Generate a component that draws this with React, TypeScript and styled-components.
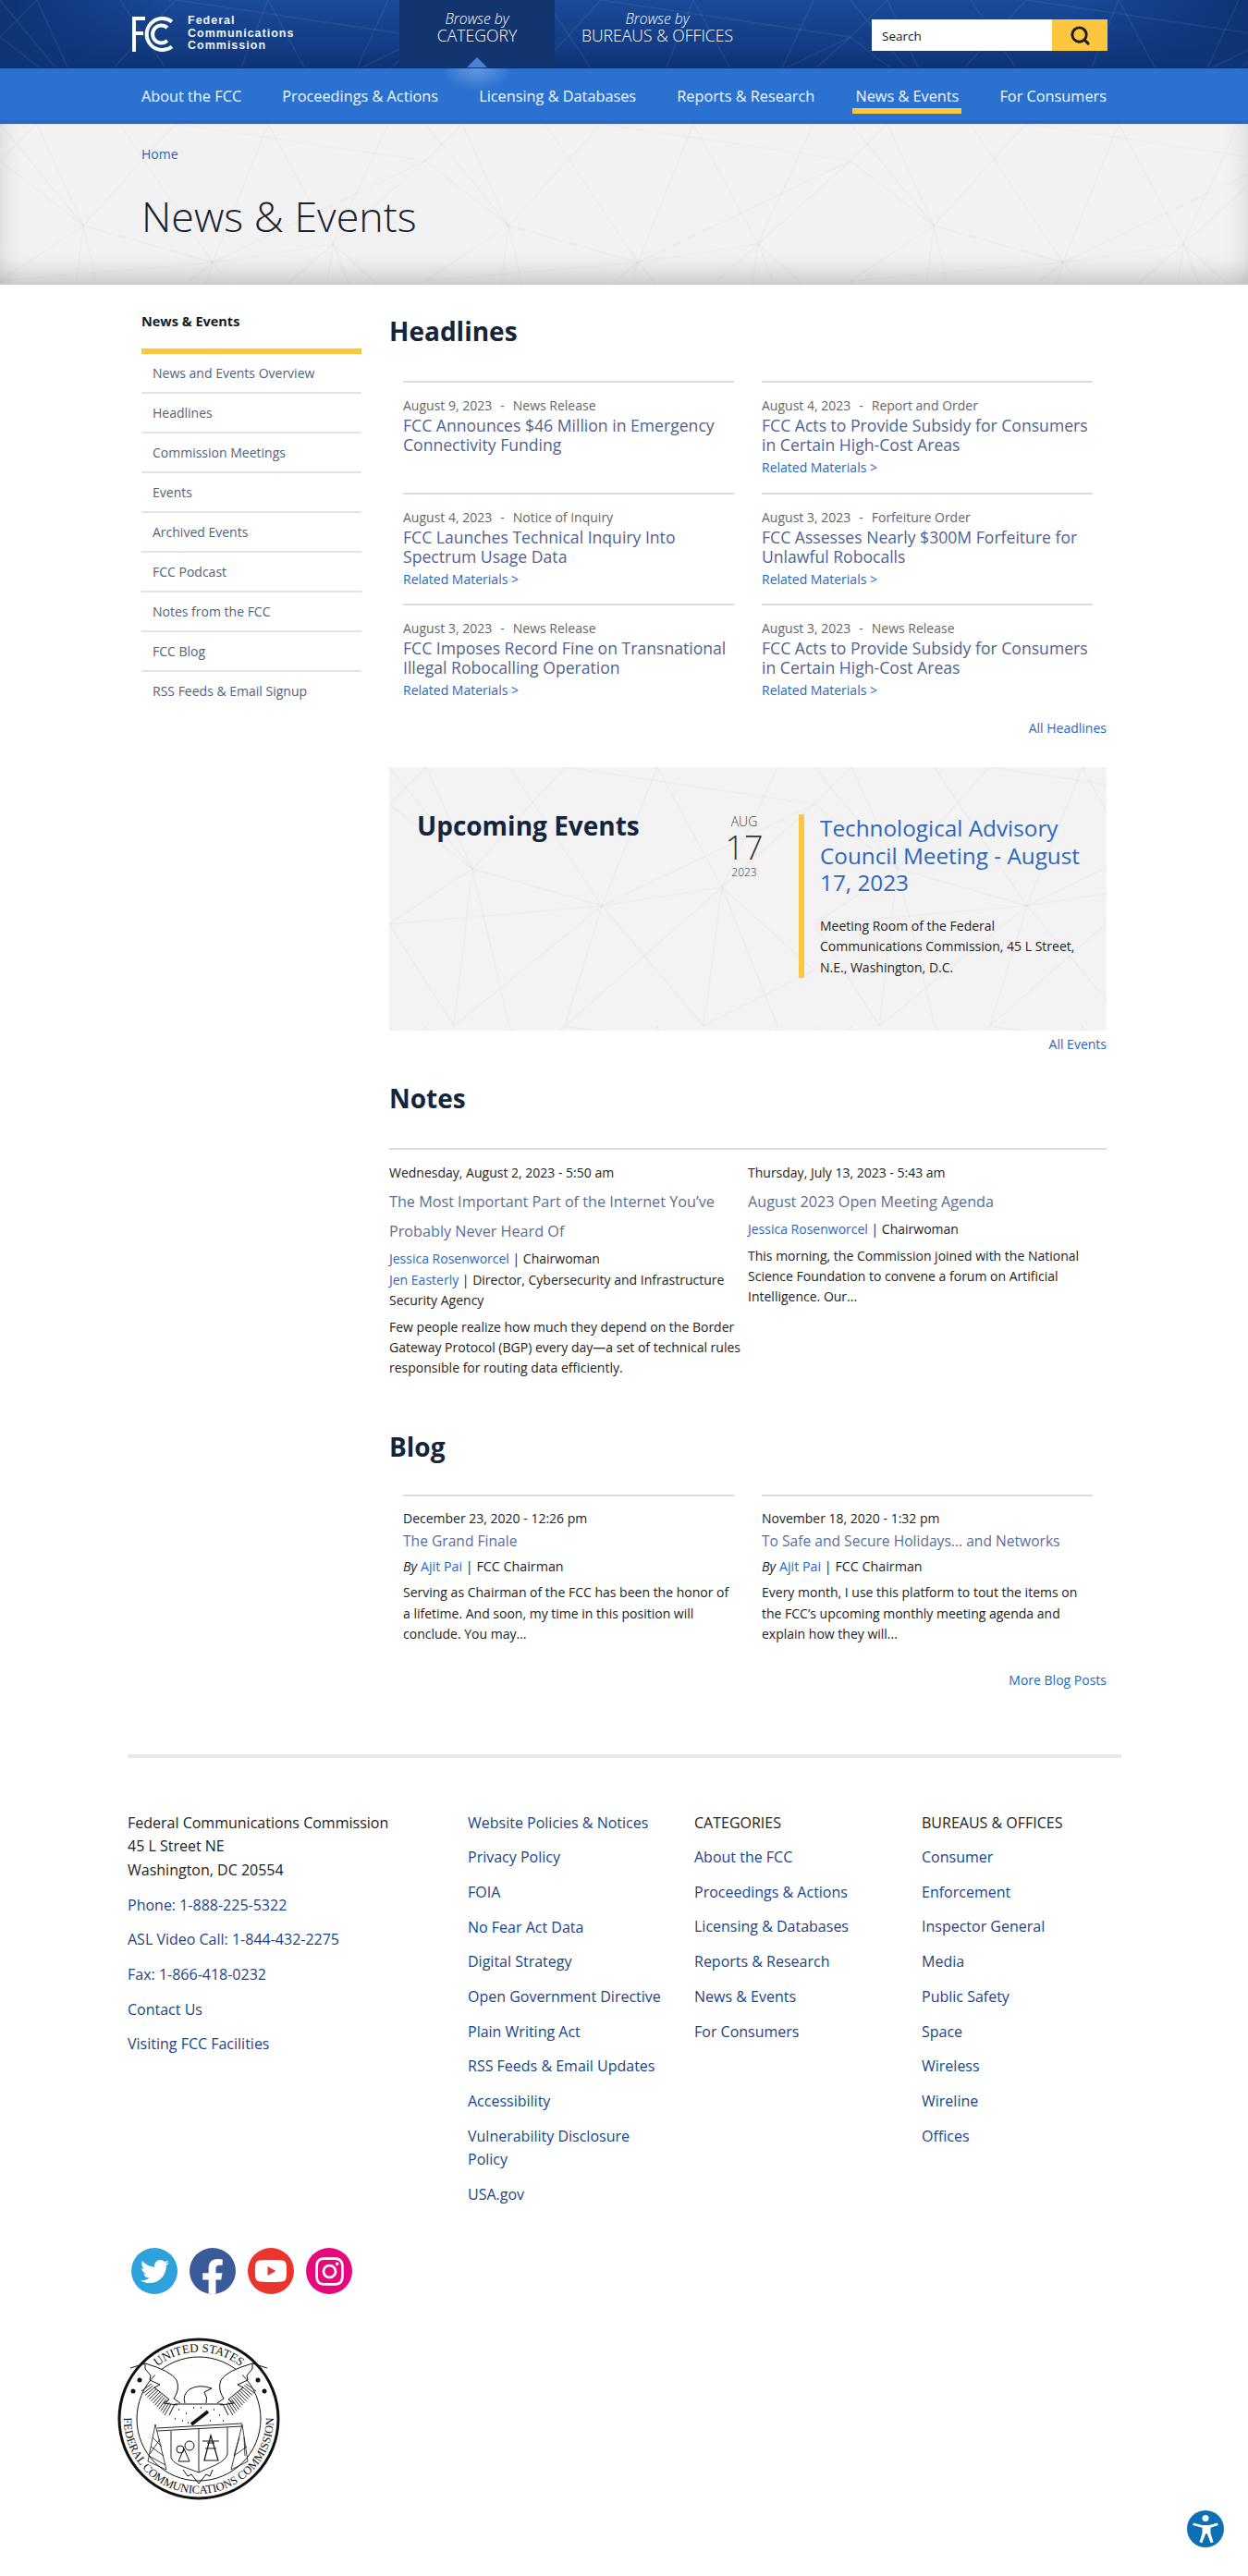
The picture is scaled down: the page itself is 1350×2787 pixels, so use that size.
// App.tsx
import React from 'react';
import styled, { createGlobalStyle } from 'styled-components';
import { Search } from 'lucide-react';
import { FaFacebookF, FaInstagram, FaTwitter, FaYoutube } from 'react-icons/fa';

const GlobalStyle = createGlobalStyle`
  html, body {
    margin: 0;
    padding: 0;
    background: #fff;
    font-family: "Open Sans", "Liberation Sans", sans-serif;
    color: #222;
  }
  * { box-sizing: border-box; }
  a { text-decoration: none; color: inherit; }
`;

// background lines, they tile every 460x280
const MESH_LINES = [
  '0,40 90,110 70,280', '90,110 190,0', '90,110 230,150 460,40', '230,150 190,280',
  '230,150 290,0', '230,150 340,280', '0,170 90,110', '0,170 70,280', '190,0 460,40',
  '460,40 360,130 460,220', '360,130 230,150', '360,130 290,0', '40,0 90,110', '130,280 90,110',
  '360,130 340,280', '360,130 420,0', '0,40 40,0', '340,280 460,220', '70,280 230,150',
  '0,170 230,150', '190,280 360,130', '420,280 360,130', '90,110 0,0', '230,150 130,0',
];

const Mesh: React.FC<{ id: string; color: string }> = ({ id, color }) => (
  <MeshSvg aria-hidden="true">
    <defs>
      <pattern id={id} width="460" height="280" patternUnits="userSpaceOnUse">
        {MESH_LINES.map(points => (
          <polyline key={points} points={points} fill="none" stroke={color} strokeWidth="1.5" />
        ))}
      </pattern>
    </defs>
    <rect width="100%" height="100%" fill={`url(#${id})`} />
  </MeshSvg>
);

const FccLogo = () => (
  <svg width="46" height="38" viewBox="0 0 46 38" fill="none">
    <path d="M0 0h14v4H4v12h8v4H4v18H0z" fill="#fff" />
    <path d="M44 5.500A17 17 0 1 0 44 32.500" stroke="#fff" strokeWidth="4" transform="translate(-1 0)" />
    <path d="M39 12A9.500 9.500 0 1 0 39 26" stroke="#fff" strokeWidth="4" transform="translate(-1 0)" />
  </svg>
);

const WING_HATCH = Array.from({ length: 13 }, (_, i) => {
  const t = i / 12;
  return `M${37 + 21 * t} ${50 + 22 * t}L${26 + 25 * t} ${58 + 26 * t}`;
}).join('');

const Seal = () => (
  <svg width="176" height="176" viewBox="0 0 176 176" fill="none" stroke="#111">
    <circle cx="88" cy="88" r="86" strokeWidth="3" />
    <circle cx="88" cy="88" r="67" strokeWidth="1" />
    <defs>
      <path id="seal-top" d="M34 40A72 72 0 0 1 142 40" />
      <path id="seal-bottom" d="M10 66A81 81 0 1 0 166 66" />
    </defs>
    <text fontFamily="'Liberation Serif', serif" fontSize="13" fill="#111" stroke="none">
      <textPath href="#seal-top" startOffset="50%" textAnchor="middle">UNITED STATES</textPath>
    </text>
    <text fontFamily="'Liberation Serif', serif" fontSize="12.500" fill="#111" stroke="none">
      <textPath href="#seal-bottom" startOffset="50%" textAnchor="middle">FEDERAL COMMUNICATIONS COMMISSION</textPath>
    </text>
    <g id="seal-wing" strokeWidth="1">
      <path d="M30 28Q58 36 64 46Q68 56 61 66L68 71" fill="#fff" />
      <path d="M30 28L30 34L36 41L35 46L46 51L40 54L56 67L50 71L65 73" />
      <path d="M14 33L30 28" />
      <path d={WING_HATCH} strokeWidth="0.900" />
    </g>
    <use href="#seal-wing" transform="translate(176 0) scale(-1 1)" />
    <path d="M73 71Q70 62 78 56Q88 50 102 55L94 59Q98 65 96 71" strokeWidth="1" />
    <path d="M56 84L62 72H114L120 84" strokeWidth="1" />
    <path d="M66 78h1M74 82h1M82 76h1M70 90h1M104 78h1M110 84h1M100 90h1M62 88h1M114 90h1M76 92h1M90 76h1" strokeWidth="1.500" />
    <path d="M80 94L98 80" strokeWidth="3.500" />
    <path d="M43 98L135 93M43 101L135 96" strokeWidth="0.900" />
    <path d="M58 101V130Q60 136 72 140L88 146L106 138Q118 132 119 126V97M88 98V146" strokeWidth="0.900" />
    <path d="M41 94L33 134L53 143ZM135 94L123 143L141 134ZM36 118L50 128M38 108L48 118M34 128L52 138M46 110L35 126M132 108L126 128M137 108L138 128M126 128L140 118" strokeWidth="0.800" />
    <path d="M101 106L94 133H109ZM95 120H107M97 114H105M92 112H110" strokeWidth="1.200" />
    <circle cx="78" cy="117" r="5" strokeWidth="1" />
    <path d="M72 120L66 134H78Z" strokeWidth="1" />
    <circle cx="68" cy="121" r="4" strokeWidth="1" />
    <path d="M71 143L76 150L80 148L88 158L96 148L100 150L103 143" strokeWidth="1" />
    <g fill="#111" stroke="none">
      <circle cx="24" cy="46" r="2.500" />
      <circle cx="17" cy="58" r="2.500" />
      <circle cx="152" cy="46" r="2.500" />
      <circle cx="159" cy="58" r="2.500" />
    </g>
  </svg>
);

const AccessIcon = () => (
  <svg width="40" height="40" viewBox="0 0 40 40">
    <circle cx="20" cy="20" r="20" fill="#0f6fb5" />
    <circle cx="20" cy="8.500" r="3.500" fill="#fff" />
    <path d="M7 13.500l9 2.500h8l9-2.500.8 2.500-8.300 2.800v6l3 9.500-2.800 1-3.900-10h-1.600l-3.900 10-2.800-1 3-9.500v-6L6.200 16z" fill="#fff" />
  </svg>
);

const NAV_ITEMS = [
  'About the FCC',
  'Proceedings & Actions',
  'Licensing & Databases',
  'Reports & Research',
  'News & Events',
  'For Consumers',
];

const SIDE_ITEMS = [
  'News and Events Overview',
  'Headlines',
  'Commission Meetings',
  'Events',
  'Archived Events',
  'FCC Podcast',
  'Notes from the FCC',
  'FCC Blog',
  'RSS Feeds & Email Signup',
];

const HEADLINES = [
  { date: 'August 9, 2023', kind: 'News Release', title: 'FCC Announces $46 Million in Emergency Connectivity Funding', related: false },
  { date: 'August 4, 2023', kind: 'Report and Order', title: 'FCC Acts to Provide Subsidy for Consumers in Certain High-Cost Areas', related: true },
  { date: 'August 4, 2023', kind: 'Notice of Inquiry', title: 'FCC Launches Technical Inquiry Into Spectrum Usage Data', related: true },
  { date: 'August 3, 2023', kind: 'Forfeiture Order', title: 'FCC Assesses Nearly $300M Forfeiture for Unlawful Robocalls', related: true },
  { date: 'August 3, 2023', kind: 'News Release', title: 'FCC Imposes Record Fine on Transnational Illegal Robocalling Operation', related: true },
  { date: 'August 3, 2023', kind: 'News Release', title: 'FCC Acts to Provide Subsidy for Consumers in Certain High-Cost Areas', related: true },
];

const BLOG_POSTS = [
  {
    date: 'December 23, 2020 - 12:26 pm',
    title: 'The Grand Finale',
    body: 'Serving as Chairman of the FCC has been the honor of a lifetime. And soon, my time in this position will conclude. You may...',
  },
  {
    date: 'November 18, 2020 - 1:32 pm',
    title: 'To Safe and Secure Holidays... and Networks',
    body: 'Every month, I use this platform to tout the items on the FCC’s upcoming monthly meeting agenda and explain how they will...',
  },
];

const POLICY_LINKS = [
  'Website Policies & Notices', 'Privacy Policy', 'FOIA', 'No Fear Act Data', 'Digital Strategy',
  'Open Government Directive', 'Plain Writing Act', 'RSS Feeds & Email Updates', 'Accessibility',
  'Vulnerability Disclosure Policy', 'USA.gov',
];

const BUREAUS = [
  'Consumer', 'Enforcement', 'Inspector General', 'Media', 'Public Safety', 'Space', 'Wireless', 'Wireline', 'Offices',
];

const App: React.FC = () => (
  <>
    <GlobalStyle />
    <Page>
      <TopBar>
        <Mesh id="mesh-top" color="rgba(255,255,255,0.06)" />
        <LogoBlock>
          <FccLogo />
          <LogoText>Federal<br />Communications<br />Commission</LogoText>
        </LogoBlock>
        <BrowseTab $active>
          <em>Browse by</em>
          <span>CATEGORY</span>
        </BrowseTab>
        <BrowseTab>
          <em>Browse by</em>
          <span>BUREAUS &amp; OFFICES</span>
        </BrowseTab>
        <SearchBox>
          <SearchField>Search</SearchField>
          <SearchButton><Search size={23} strokeWidth={3} color="#1b1b1b" /></SearchButton>
        </SearchBox>
      </TopBar>

      <NavBar>
        <NavGlow />
        {NAV_ITEMS.map(item => (
          <NavLink key={item} $active={item === 'News & Events'}>{item}</NavLink>
        ))}
      </NavBar>

      <Hero>
        <Mesh id="mesh-hero" color="rgba(0,0,0,0.02)" />
        <Crumb>Home</Crumb>
        <HeroTitle>News &amp; Events</HeroTitle>
      </Hero>

      <Columns>
        <Sidebar>
          <SideTitle>News &amp; Events</SideTitle>
          {SIDE_ITEMS.map(item => <SideLink key={item}>{item}</SideLink>)}
        </Sidebar>

        <Main>
          <Heading>Headlines</Heading>
          <HeadlineGrid>
            {HEADLINES.map(item => (
              <HeadlineCard key={item.title + item.date}>
                <Meta>{item.date}<Dash>-</Dash>{item.kind}</Meta>
                <HeadlineTitle>{item.title}</HeadlineTitle>
                {item.related && <Related>Related Materials &gt;</Related>}
              </HeadlineCard>
            ))}
          </HeadlineGrid>
          <MoreLink>All Headlines</MoreLink>

          <EventBox>
            <Mesh id="mesh-event" color="rgba(0,0,0,0.024)" />
            <EventHeading>Upcoming Events</EventHeading>
            <DateCol>
              <DateMonth>AUG</DateMonth>
              <DateDay>17</DateDay>
              <DateYear>2023</DateYear>
            </DateCol>
            <EventDetail>
              <EventTitle>Technological Advisory Council Meeting - August 17, 2023</EventTitle>
              <EventPlace>Meeting Room of the Federal Communications Commission, 45 L Street, N.E., Washington, D.C.</EventPlace>
            </EventDetail>
          </EventBox>
          <MoreLink $tight>All Events</MoreLink>

          <NotesHeading>Notes</NotesHeading>
          <NotesGrid>
            <div>
              <PlainDate>Wednesday, August 2, 2023 - 5:50 am</PlainDate>
              <NoteTitle>The Most Important Part of the Internet You’ve Probably Never Heard Of</NoteTitle>
              <Author><AuthorLink>Jessica Rosenworcel</AuthorLink> | Chairwoman</Author>
              <Author><AuthorLink>Jen Easterly</AuthorLink> | Director, Cybersecurity and Infrastructure Security Agency</Author>
              <Body>Few people realize how much they depend on the Border Gateway Protocol (BGP) every day—a set of technical rules responsible for routing data efficiently.</Body>
            </div>
            <div>
              <PlainDate>Thursday, July 13, 2023 - 5:43 am</PlainDate>
              <NoteTitle>August 2023 Open Meeting Agenda</NoteTitle>
              <Author><AuthorLink>Jessica Rosenworcel</AuthorLink> | Chairwoman</Author>
              <Body>This morning, the Commission joined with the National Science Foundation to convene a forum on Artificial Intelligence. Our...</Body>
            </div>
          </NotesGrid>

          <BlogHeading>Blog</BlogHeading>
          <BlogGrid>
            {BLOG_POSTS.map(post => (
              <BlogCard key={post.title}>
                <PlainDate>{post.date}</PlainDate>
                <BlogTitle>{post.title}</BlogTitle>
                <ByLine><em>By</em> <AuthorLink>Ajit Pai</AuthorLink> | FCC Chairman</ByLine>
                <Body>{post.body}</Body>
              </BlogCard>
            ))}
          </BlogGrid>
          <MoreLink $blog>More Blog Posts</MoreLink>
        </Main>
      </Columns>

      <Footer>
        <FooterGrid>
          <FooterCol>
            <Address>Federal Communications Commission<br />45 L Street NE<br />Washington, DC 20554</Address>
            <FooterLink>Phone: 1-888-225-5322</FooterLink>
            <FooterLink>ASL Video Call: 1-844-432-2275</FooterLink>
            <FooterLink>Fax: 1-866-418-0232</FooterLink>
            <FooterLink>Contact Us</FooterLink>
            <FooterLink>Visiting FCC Facilities</FooterLink>
          </FooterCol>
          <FooterCol $narrow>
            {POLICY_LINKS.map(link => <FooterLink key={link}>{link}</FooterLink>)}
          </FooterCol>
          <FooterCol>
            <FooterHead>CATEGORIES</FooterHead>
            {NAV_ITEMS.map(link => <FooterLink key={link}>{link}</FooterLink>)}
          </FooterCol>
          <FooterCol>
            <FooterHead>BUREAUS &amp; OFFICES</FooterHead>
            {BUREAUS.map(link => <FooterLink key={link}>{link}</FooterLink>)}
          </FooterCol>
        </FooterGrid>
        <SocialRow>
          <SocialDot $bg="#2ea2dc"><FaTwitter size={31} /></SocialDot>
          <SocialDot $bg="#3b5a9a" $clip><FaFacebookF size={40} /></SocialDot>
          <SocialDot $bg="#e9352c"><FaYoutube size={36} /></SocialDot>
          <SocialDot $bg="#e6087c"><FaInstagram size={35} /></SocialDot>
        </SocialRow>
        <SealWrap><Seal /></SealWrap>
      </Footer>

      <AccessButton><AccessIcon /></AccessButton>
    </Page>
  </>
);

export default App;

// Styled components

const Page = styled.div`
  position: relative;
  width: 1350px;
  height: 2787px;
  overflow: hidden;
`;

const MeshSvg = styled.svg`
  position: absolute;
  inset: 0;
  width: 100%;
  height: 100%;
  pointer-events: none;
`;

const TopBar = styled.header`
  position: relative;
  display: flex;
  height: 74px;
  padding-left: 143px;
  background: linear-gradient(90deg, #0e3376 0%, rgba(14, 51, 118, 0) 14%, rgba(14, 51, 118, 0) 86%, #0e3376 100%),
    linear-gradient(180deg, #1a4a98 0%, #133c83 70%, #0e3272 100%);
  border-bottom: 1px solid #0c2c66;
`;

const LogoBlock = styled.div`
  position: relative;
  display: flex;
  align-items: center;
  gap: 14px;
  width: 289px;
`;

const LogoText = styled.div`
  font-family: "Liberation Sans", Arial, sans-serif;
  font-size: 12.5px;
  font-weight: 700;
  line-height: 13.4px;
  letter-spacing: 1px;
  color: #f1f4fa;
`;

const BrowseTab = styled.a<{ $active?: boolean }>`
  position: relative;
  display: flex;
  flex-direction: column;
  align-items: center;
  width: ${({ $active }) => ($active ? '168px' : '222px')};
  padding-top: 11px;
  color: #fff;
  background: ${({ $active }) => ($active ? '#12346f' : 'transparent')};

  em {
    font-size: 15.7px;
    font-weight: 300;
    line-height: 18px;
  }
  span {
    font-size: 17.6px;
    font-weight: 300;
    line-height: 18px;
  }
  ${({ $active }) =>
    $active &&
    `
    &::after {
      content: '';
      position: absolute;
      left: 73px;
      bottom: 0;
      border-left: 11px solid transparent;
      border-right: 11px solid transparent;
      border-bottom: 11px solid #4a80d6;
    }
  `}
`;

const SearchBox = styled.div`
  position: relative;
  display: flex;
  width: 255px;
  height: 34px;
  margin: 21px 0 0 121px;
`;

const SearchField = styled.div`
  width: 195px;
  padding-left: 11px;
  font-size: 13.5px;
  line-height: 36px;
  color: #111;
  background: #fff;
`;

const SearchButton = styled.button`
  display: flex;
  align-items: center;
  justify-content: center;
  width: 60px;
  padding: 0;
  border: 0;
  background: #fcc63f;
`;

const NavBar = styled.nav`
  position: relative;
  display: flex;
  justify-content: space-between;
  height: 60px;
  padding: 17px 153px 0;
  background: #2b71d0;
  border-bottom: 4px solid #2768c6;
`;

const NavGlow = styled.div`
  position: absolute;
  top: 0;
  left: 478px;
  width: 76px;
  height: 24px;
  background: radial-gradient(ellipse at 50% 0, rgba(150, 185, 240, 0.55), rgba(150, 185, 240, 0) 72%);
`;

const NavLink = styled.a<{ $active?: boolean }>`
  position: relative;
  font-size: 16.3px;
  line-height: 27px;
  color: #f2f6fd;
  ${({ $active }) =>
    $active &&
    `
    &::after {
      content: '';
      position: absolute;
      left: -3px;
      right: -3px;
      top: 26px;
      height: 6px;
      background: #fcc63f;
    }
  `}
`;

const Hero = styled.section`
  position: relative;
  height: 174px;
  padding: 23px 153px 0;
  background: #f2f2f3;
  box-shadow: inset 0 -34px 26px -24px rgba(0, 0, 0, 0.18), inset 30px 0 24px -26px rgba(0, 0, 0, 0.1),
    inset -30px 0 24px -26px rgba(0, 0, 0, 0.1), inset 0 2px 2px -1px #dbe9f2;
  border-bottom: 1px solid #c9c9c9;
`;

const Crumb = styled.a`
  position: relative;
  display: block;
  font-size: 14px;
  line-height: 20px;
  color: #2b62b5;
`;

const HeroTitle = styled.h1`
  position: relative;
  margin: 27px 0 0;
  font-size: 44.8px;
  font-weight: 300;
  line-height: 60px;
  color: #172233;
`;

const Columns = styled.div`
  display: flex;
  padding: 30px 153px 0;
  height: 1590px;
`;

const Sidebar = styled.aside`
  width: 238px;
  flex: none;
`;

const SideTitle = styled.h2`
  margin: 0;
  height: 45px;
  border-bottom: 6px solid #fcc63f;
  font-size: 14.5px;
  font-weight: 700;
  line-height: 20px;
  color: #141c28;
`;

const SideLink = styled.a`
  display: block;
  height: 43px;
  padding: 11px 0 0 12px;
  font-size: 14px;
  line-height: 20px;
  color: #51627c;
  border-bottom: 2px solid #e3e3e3;

  &:last-child {
    border-bottom: 0;
  }
`;

const Main = styled.main`
  width: 776px;
  margin-left: 30px;
  flex: none;
`;

const Heading = styled.h2`
  margin: 0 0 34px;
  font-size: 28px;
  font-weight: 700;
  line-height: 40px;
  color: #15243a;
`;

const NotesHeading = styled(Heading)`
  margin: 28px 0 34px;
`;

const BlogHeading = styled(Heading)`
  margin: 54px 0 32px;
`;

const HeadlineGrid = styled.div`
  display: grid;
  grid-template-columns: 358px 358px;
  column-gap: 30px;
  padding-left: 15px;
`;

const HeadlineCard = styled.article`
  height: 120.5px;
  padding-top: 14px;
  border-top: 2px solid #dcdcdc;
`;

const Meta = styled.div`
  font-size: 14px;
  line-height: 22px;
  color: #666;
`;

const Dash = styled.span`
  margin: 0 9px;
`;

const HeadlineTitle = styled.a`
  display: block;
  font-size: 17.6px;
  line-height: 21px;
  color: #4f6391;
`;

const Related = styled.a`
  display: block;
  margin-top: 3px;
  font-size: 14px;
  line-height: 22px;
  color: #2b66c1;
`;

const MoreLink = styled.a<{ $tight?: boolean; $blog?: boolean }>`
  display: block;
  margin-top: ${({ $tight, $blog }) => ($tight ? '5px' : $blog ? '29px' : '4.500px')};
  font-size: 14px;
  line-height: 20px;
  text-align: right;
  color: #2b66c1;
`;

const EventBox = styled.section`
  position: relative;
  display: flex;
  height: 285px;
  margin-top: 32px;
  padding: 43px 0 0 30px;
  background: #f3f3f4;
`;

const EventHeading = styled.h2`
  position: relative;
  width: 324px;
  margin: 0;
  font-size: 28px;
  font-weight: 700;
  line-height: 40px;
  color: #15243a;
`;

const DateCol = styled.div`
  position: relative;
  width: 60px;
  padding-top: 7px;
  text-align: center;
  color: #333;
  font-weight: 300;
`;

const DateMonth = styled.div`
  font-size: 14px;
  line-height: 18px;
`;

const DateDay = styled.div`
  font-size: 36px;
  line-height: 38px;
`;

const DateYear = styled.div`
  font-size: 12px;
  line-height: 15px;
`;

const EventDetail = styled.div`
  position: relative;
  width: 333px;
  height: 177px;
  margin: 8px 0 0 29px;
  padding: 0 20px 0 17px;
  border-left: 6px solid #fcc63f;
`;

const EventTitle = styled.a`
  display: block;
  font-size: 24.3px;
  line-height: 29.500px;
  color: #2b66c1;
`;

const EventPlace = styled.p`
  margin: 21px 0 0;
  font-size: 14px;
  line-height: 22.500px;
  color: #222;
`;

const NotesGrid = styled.div`
  display: grid;
  grid-template-columns: 388px 388px;
  padding-top: 14px;
  border-top: 2px solid #dcdcdc;
`;

const PlainDate = styled.div`
  font-size: 14px;
  line-height: 22px;
  color: #222;
`;

const NoteTitle = styled.a`
  display: block;
  margin: 4px 0 3px;
  font-size: 16.2px;
  line-height: 32px;
  color: #5a6e96;
`;

const Author = styled.div`
  font-size: 14px;
  line-height: 22.500px;
  color: #222;
`;

const AuthorLink = styled.a`
  color: #2b66c1;
`;

const Body = styled.p`
  margin: 6px 0 0;
  font-size: 14px;
  line-height: 22.300px;
  color: #222;
`;

const BlogGrid = styled.div`
  display: grid;
  grid-template-columns: 358px 358px;
  column-gap: 30px;
  padding-left: 15px;
`;

const BlogCard = styled.article`
  padding-top: 13px;
  border-top: 2px solid #dcdcdc;
`;

const BlogTitle = styled.a`
  display: block;
  margin-top: 1px;
  font-size: 15.6px;
  line-height: 24px;
  color: #5a6e96;
`;

const ByLine = styled.div`
  margin-top: 5px;
  font-size: 14.3px;
  line-height: 22px;
  color: #222;
`;

const Footer = styled.footer`
  width: 1075px;
  margin-left: 138px;
  border-top: 4px solid #e8e8e8;
`;

const FooterGrid = styled.div`
  display: grid;
  grid-template-columns: 368px 245px 246px 216px;
  height: 530px;
  padding-top: 57.500px;
`;

const FooterCol = styled.div<{ $narrow?: boolean }>`
  padding-right: ${({ $narrow }) => ($narrow ? '30px' : '0')};
`;

const Address = styled.div`
  margin-bottom: 12.500px;
  font-size: 16px;
  line-height: 25.500px;
  color: #222;
`;

const FooterHead = styled.div`
  margin-bottom: 12.500px;
  font-size: 16px;
  line-height: 25px;
  color: #222;
`;

const FooterLink = styled.a`
  display: block;
  margin-bottom: 12.500px;
  font-size: 16px;
  line-height: 25.200px;
  color: #1a4489;
`;

const SocialRow = styled.div`
  display: flex;
  gap: 13px;
  padding-left: 4px;
`;

const SocialDot = styled.a<{ $bg: string; $clip?: boolean }>`
  display: flex;
  align-items: ${({ $clip }) => ($clip ? 'flex-end' : 'center')};
  justify-content: center;
  width: 50px;
  height: 50px;
  border-radius: 50%;
  overflow: hidden;
  color: #fff;
  background: ${({ $bg }) => $bg};

  svg {
    margin-bottom: ${({ $clip }) => ($clip ? '-2px' : '0')};
  }
`;

const SealWrap = styled.div`
  margin: 47px 0 0 -11px;
`;

const AccessButton = styled.div`
  position: absolute;
  left: 1284px;
  top: 2716px;
  width: 40px;
  height: 40px;
`;
